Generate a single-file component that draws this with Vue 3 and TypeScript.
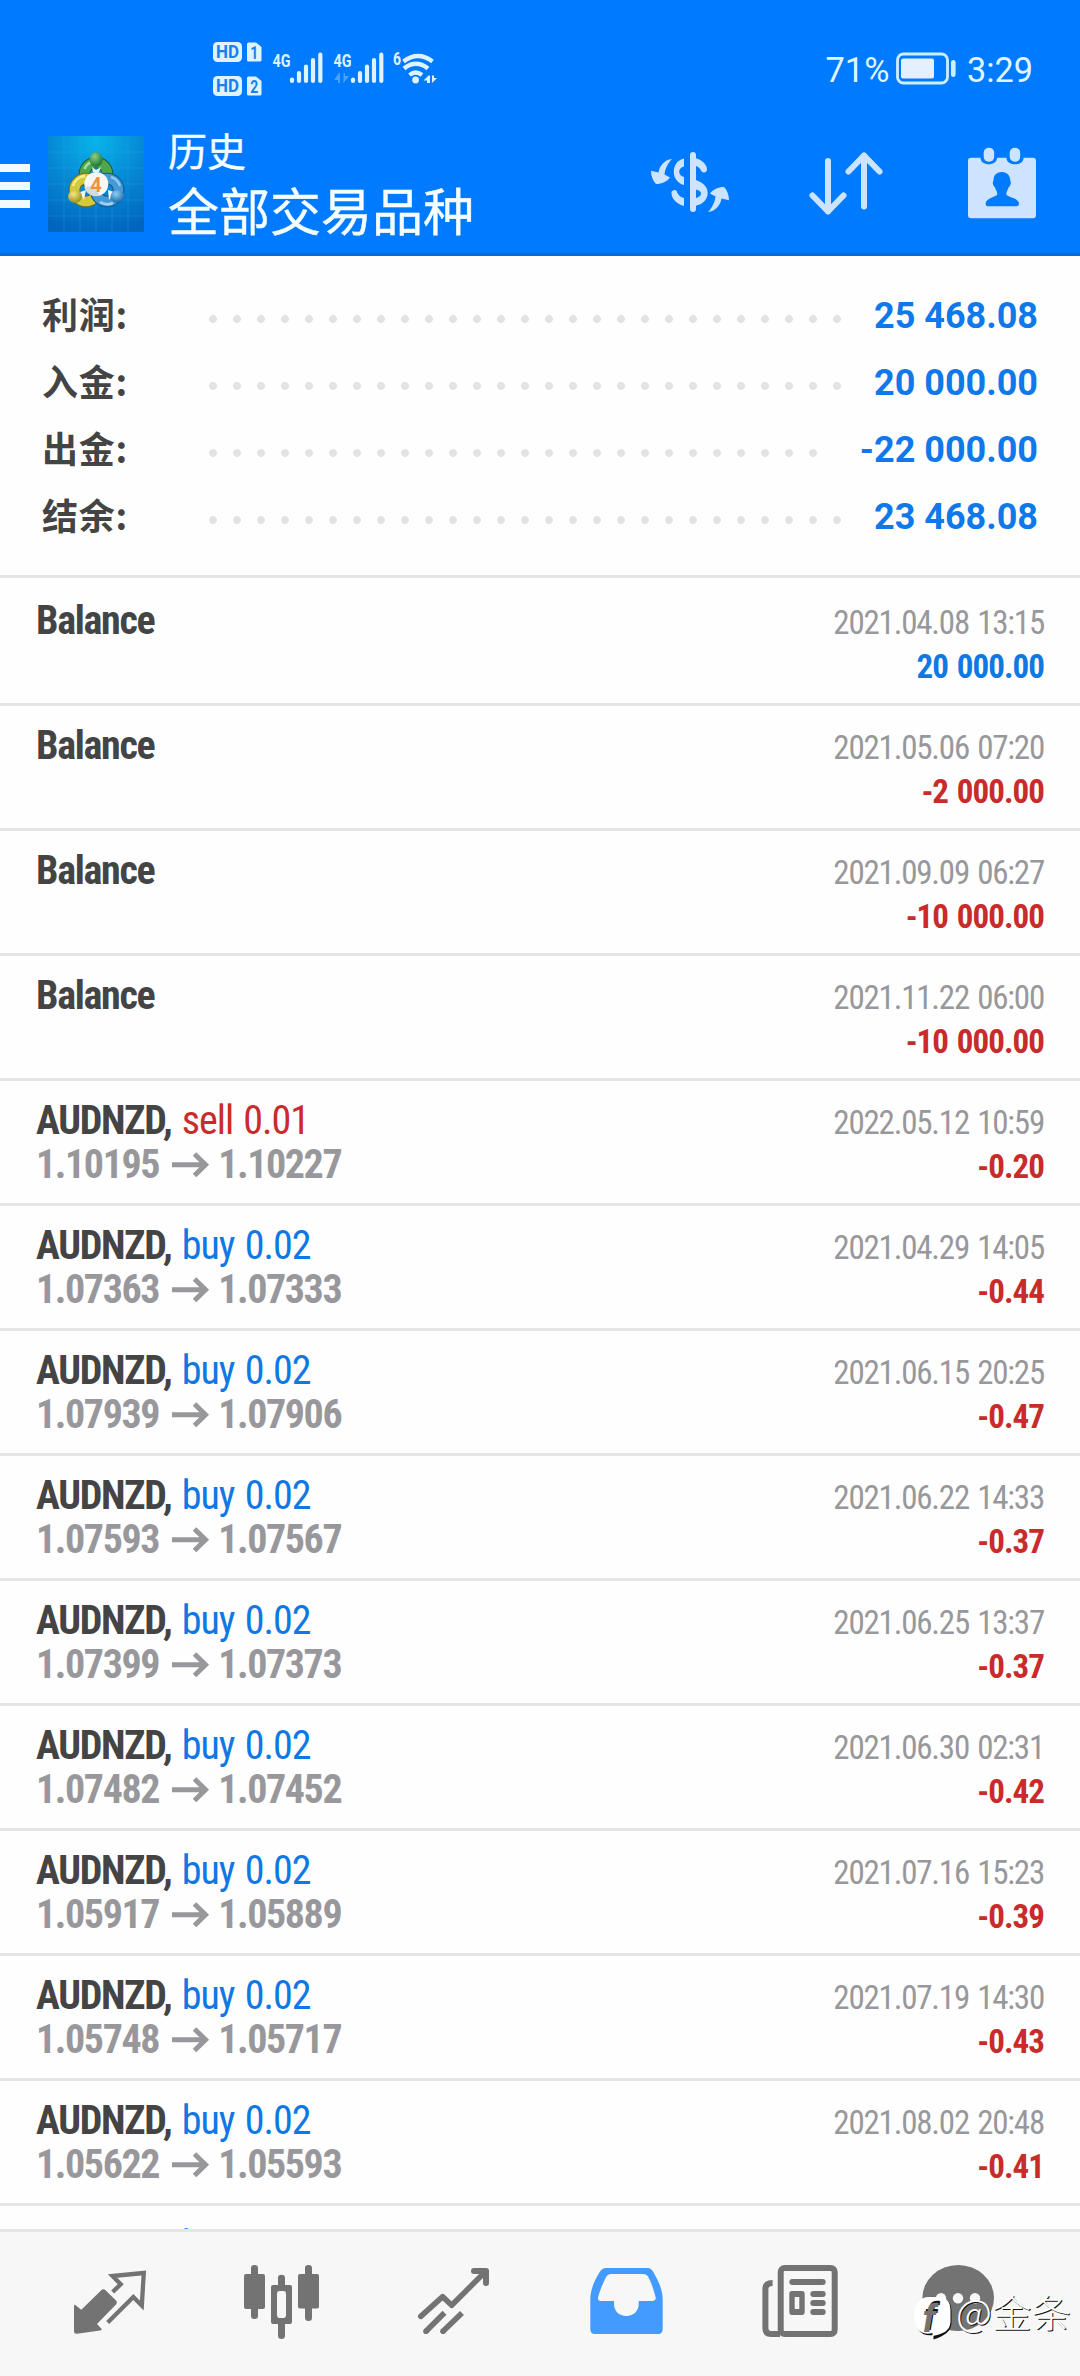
<script setup lang="ts">
interface SummaryLine { label: string; value: string; dots: number }
interface Deal {
  symbol: string
  action?: string
  side?: 'buy' | 'sell'
  open?: string
  close?: string
  time: string
  amount: string
}

const summary: SummaryLine[] = [
  { label: '利润:', value: '25 468.08', dots: 27 },
  { label: '入金:', value: '20 000.00', dots: 27 },
  { label: '出金:', value: '-22 000.00', dots: 26 },
  { label: '结余:', value: '23 468.08', dots: 27 },
]

const balance = (time: string, amount: string): Deal => ({ symbol: 'Balance', time, amount })
const deal = (side: 'buy' | 'sell', lots: string, open: string, close: string, time: string, amount: string): Deal => ({
  symbol: 'AUDNZD,', side, action: `${side} ${lots}`, open, close, time, amount,
})

const deals: Deal[] = [
  balance('2021.04.08 13:15', '20 000.00'),
  balance('2021.05.06 07:20', '-2 000.00'),
  balance('2021.09.09 06:27', '-10 000.00'),
  balance('2021.11.22 06:00', '-10 000.00'),
  deal('sell', '0.01', '1.10195', '1.10227', '2022.05.12 10:59', '-0.20'),
  deal('buy', '0.02', '1.07363', '1.07333', '2021.04.29 14:05', '-0.44'),
  deal('buy', '0.02', '1.07939', '1.07906', '2021.06.15 20:25', '-0.47'),
  deal('buy', '0.02', '1.07593', '1.07567', '2021.06.22 14:33', '-0.37'),
  deal('buy', '0.02', '1.07399', '1.07373', '2021.06.25 13:37', '-0.37'),
  deal('buy', '0.02', '1.07482', '1.07452', '2021.06.30 02:31', '-0.42'),
  deal('buy', '0.02', '1.05917', '1.05889', '2021.07.16 15:23', '-0.39'),
  deal('buy', '0.02', '1.05748', '1.05717', '2021.07.19 14:30', '-0.43'),
  deal('buy', '0.02', '1.05622', '1.05593', '2021.08.02 20:48', '-0.41'),
  deal('buy', '0.02', '', '', '', ''),
]
</script>

<template>
  <div class="screen">
    <header class="header">
      <div class="status">
        <svg class="signals" viewBox="205 36 240 64" width="240" height="64">
          <g fill="#dff3ff">
            <rect x="213" y="42" width="29" height="20" rx="4.5" />
            <rect x="213" y="76" width="29" height="20" rx="4.5" />
            <path d="M248.500 42.500H256L261.500 47V60Q261.500 61.500 260 61.500H248.500Q247 61.500 247 60V44Q247 42.500 248.500 42.500Z" />
            <path d="M248.500 76.500H256L261.500 81V94Q261.500 95.500 260 95.500H248.500Q247 95.500 247 94V78Q247 76.500 248.500 76.500Z" />
          </g>
          <g class="badge-text" fill="#1a7ff0">
            <text x="216" y="58.300" textLength="23" lengthAdjust="spacingAndGlyphs">HD</text>
            <text x="216" y="92.300" textLength="23" lengthAdjust="spacingAndGlyphs">HD</text>
            <text x="250.300" y="58.500" textLength="8" lengthAdjust="spacingAndGlyphs">1</text>
            <text x="250.300" y="92.500" textLength="8" lengthAdjust="spacingAndGlyphs">2</text>
          </g>
          <g class="net-text" fill="#dff3ff">
            <text x="272.500" y="66.500" textLength="18" lengthAdjust="spacingAndGlyphs">4G</text>
            <text x="333.500" y="66.500" textLength="18" lengthAdjust="spacingAndGlyphs">4G</text>
            <text x="393" y="65.200" textLength="8" lengthAdjust="spacingAndGlyphs">6</text>
          </g>
          <g stroke="#dff3ff" stroke-width="4.200" stroke-linecap="round">
            <path d="M292 79.500V81M299 73V81M306 66.500V81M313 60V81M320.300 54.500V81" />
            <path d="M353 79.500V81M360 73V81M367 66.500V81M374 60V81M381.300 54.500V81" />
          </g>
          <path d="M339 73L334 80H338V83H340V73ZM343.500 83V73H345V76H349Z" fill="#4aa3ff" />
          <g fill="none" stroke="#dff3ff" stroke-width="4.200">
            <path d="M403.500 61.500Q418 50.500 432.500 61.500" />
            <path d="M404 68.500Q416 59 428 68.500" stroke-width="4.500" />
            <path d="M409.500 75Q415.500 70 422 75" />
          </g>
          <circle cx="415.600" cy="80" r="3.400" fill="#dff3ff" />
          <path d="M428.500 75.500L423.500 80.500H427V83H430V75.500ZM432 83V75.500H434V78H437Z" fill="#dff3ff" />
        </svg>
        <svg class="power" viewBox="820 46 220 44" width="220" height="44">
          <g class="clock-text" fill="#dff6ff">
            <text x="825.500" y="82" textLength="64" lengthAdjust="spacingAndGlyphs">71%</text>
            <text x="967" y="82" textLength="66" lengthAdjust="spacingAndGlyphs">3:29</text>
          </g>
          <rect x="897.500" y="54" width="50" height="29" rx="6" fill="none" stroke="#cdeeff" stroke-width="2.800" />
          <rect x="901" y="58.500" width="33" height="20" rx="2" fill="#e4f0ff" />
          <rect x="951" y="60" width="4.600" height="17" rx="2.300" fill="#cdeeff" />
        </svg>
      </div>

      <div class="appbar">
        <div class="menu"><i /><i /><i /></div>
        <svg class="logo" viewBox="0 0 96 96" width="96" height="96">
          <defs>
            <radialGradient id="bg" cx=".5" cy=".05" r="1"><stop offset="0" stop-color="#08b4ea" /><stop offset=".5" stop-color="#0588d4" /><stop offset="1" stop-color="#0164bd" /></radialGradient>
            <radialGradient id="gg" cx=".4" cy=".3" r=".7"><stop offset="0" stop-color="#8fd184" /><stop offset="1" stop-color="#1c7334" /></radialGradient>
            <radialGradient id="yg" cx=".4" cy=".3" r=".7"><stop offset="0" stop-color="#f4ea7c" /><stop offset="1" stop-color="#97921c" /></radialGradient>
            <radialGradient id="blg" cx=".4" cy=".3" r=".7"><stop offset="0" stop-color="#8fd0f4" /><stop offset="1" stop-color="#1568ab" /></radialGradient>
          </defs>
          <rect width="96" height="96" fill="url(#bg)" />
          <path d="M0 16H96M0 32H96M0 48H96M0 64H96M0 80H96M16 0V96M32 0V96M48 0V96M64 0V96M80 0V96" stroke="#39a9e8" stroke-opacity=".35" stroke-width=".8" />
          <g fill="none">
            <circle cx="48" cy="38" r="11.500" stroke="#1a5e35" stroke-width="11.500" />
            <circle cx="48" cy="38" r="11.500" stroke="#4fa64d" stroke-width="9.500" />
            <path d="M36.500 33A13 13 0 0 1 43 26" stroke="#a3dc94" stroke-width="2.500" />
            <circle cx="38" cy="54" r="11.500" stroke="#716d22" stroke-width="11.500" />
            <circle cx="38" cy="54" r="11.500" stroke="#d2c93c" stroke-width="9.500" />
            <path d="M25 50A14 14 0 0 1 37 40" stroke="#f5ef88" stroke-width="2.500" />
            <circle cx="59" cy="54" r="11.500" stroke="#15568c" stroke-width="11.500" />
            <circle cx="59" cy="54" r="11.500" stroke="#4799d6" stroke-width="9.500" />
            <path d="M52 66A14 14 0 0 0 65 67" stroke="#9ed3f3" stroke-width="2.500" />
            <path d="M63 41A14 14 0 0 1 72 50" stroke="#8bc9ef" stroke-width="2.500" />
          </g>
          <path d="M44 31L48 34L53 31L51 36H45Z" fill="#e6f3e4" />
          <path d="M32 56L38 54L36 64ZM66 56L60 54L61 64Z" fill="#eef4fb" />
          <ellipse cx="48" cy="23.500" rx="6.500" ry="7.300" fill="url(#gg)" />
          <ellipse cx="27" cy="60.500" rx="7" ry="6.500" fill="url(#yg)" />
          <ellipse cx="69.500" cy="60.500" rx="7" ry="6.500" fill="url(#blg)" />
          <circle cx="48.300" cy="48" r="12" fill="#f6f7f8" />
          <path d="M36.300 51Q45 49 48 53.500T52 59.400A12 12 0 0 1 36.300 51Z" fill="#d5dadf" />
          <text x="48" y="55.500" text-anchor="middle" class="logo-text" fill="#f0913e">4</text>
        </svg>
        <div class="titles">
          <div class="title">历史</div>
          <div class="subtitle">全部交易品种</div>
        </div>
        <svg class="actions" viewBox="640 144 400 80" width="400" height="80" fill="#cce4ff">
          <rect x="690" y="152" width="6" height="60" rx="3" />
          <path d="M684 158.500C677 160 673.800 166 673.800 171.700S677 183 684 185V177C681 176 679.200 174.500 679.200 171.700S681 167.500 684 166.500Z" />
          <path d="M684 206C677 204 672 199.500 671.500 193.500A2.800 2.800 0 0 1 677.200 192.500C678.500 195.500 681 197.500 684 198Z" />
          <path d="M696 158.300C702 160 707.500 165 707 170A3.100 3.100 0 0 1 701 170.500C700 168.500 698.500 166.500 696 166Z" />
          <path fill-rule="evenodd" d="M696 180C702 182.500 707.700 186 707.700 193S702 204.500 696 205.700ZM696 189.500V198C699 197 701 196 701 193.500S699 190.500 696 189.500Z" />
          <path d="M672 159C664 160 659.500 166 658.500 172.500L651 170.700C651 176 653 181 656 184C662 184 667 181.500 670 177.500L664.500 174.500C665 169 668 163 672 159Z" />
          <path transform="rotate(180 690 185.500)" d="M672 159C664 160 659.500 166 658.500 172.500L651 170.700C651 176 653 181 656 184C662 184 667 181.500 670 177.500L664.500 174.500C665 169 668 163 672 159Z" />
          <g fill="none" stroke="#cce4ff" stroke-width="6" stroke-linecap="round" stroke-linejoin="round">
            <path d="M828 161V211.500M812.500 195.500L828 211.500L843.500 195.500" />
            <path d="M864 206.500V155.500M848.500 171.500L864 155.500L879.500 171.500" />
          </g>
          <path fill-rule="evenodd" d="M971 157.700H980.500C980.500 162 984 164.200 988.700 164.200S997 162 997 157.700H1006.500C1006.500 162 1010 164.200 1015 164.200S1023.500 162 1023.500 157.700H1033Q1036 157.700 1036 161V215Q1036 218.300 1033 218.300H971Q968 218.300 968 215V161Q968 157.700 971 157.700ZM1001.800 172C996 172 993.500 176 993.500 180.500C991.800 183 993.500 186 995 187.500C995.500 190 998 192 997 195C994 197.500 987 198 985.600 203Q985.600 206.200 987.500 206.200H1016.500Q1019 206.200 1019 203C1017.500 198 1009.500 197.500 1006.600 195C1005.600 192 1008 190 1008.500 187.500C1010 186 1011.800 183 1010.200 180.500C1010.200 176 1007.500 172 1001.800 172Z" />
          <rect x="983.700" y="147.700" width="10.500" height="14" rx="5" />
          <rect x="1009.700" y="147.700" width="10.500" height="14" rx="5" />
        </svg>
      </div>
    </header>

    <section class="summary">
      <div v-for="line in summary" :key="line.label" class="sum-line">
        <span class="sum-label">{{ line.label }}</span>
        <span class="dots" :style="{ width: line.dots * 24 + 'px' }" />
        <span class="sum-value">{{ line.value }}</span>
      </div>
    </section>

    <main class="list">
      <div v-for="(d, i) in deals" :key="i" class="row">
        <div class="left">
          <div class="line1"><b>{{ d.symbol }}</b><span v-if="d.action" :class="d.side">&nbsp;{{ d.action }}</span></div>
          <div v-if="d.open" class="line2">
            <span>{{ d.open }}</span>
            <svg viewBox="0 0 38 26" width="38" height="26"><path d="M0 12.700H33M22.500 2L33.500 12.700L22.500 23.500" fill="none" stroke="#98989c" stroke-width="5" /></svg>
            <span>{{ d.close }}</span>
          </div>
        </div>
        <div class="right">
          <div class="time">{{ d.time }}</div>
          <div class="amount" :class="d.amount.startsWith('-') ? 'sell' : 'buy'">{{ d.amount }}</div>
        </div>
      </div>
    </main>

    <nav class="tabs">
      <svg viewBox="24 2232 172 144" class="tab">
        <path d="M101.500 2290Q103.300 2288.300 105.300 2290L116.500 2301Q117.500 2302.700 116 2304.500L97 2324L101.700 2329Q102 2330.500 100 2330.500L77 2333.700Q74 2334 74 2331.500V2306Q74.300 2304 76 2305.500L81.300 2309.700Z" />
        <path d="M112.700 2292L120.700 2284.300L112.500 2276L143.800 2273L141.800 2305.500L133.300 2297L107.700 2322.500" fill="none" stroke="#737373" stroke-width="4.300" />
      </svg>
      <svg viewBox="196 2232 172 144" class="tab">
        <rect x="244" y="2274" width="21" height="35" rx="2" /><rect x="251" y="2265" width="7" height="54" rx="3.300" />
        <rect x="298" y="2274" width="21" height="34.500" rx="2" /><rect x="305" y="2265" width="7" height="56" rx="3.300" />
        <path fill-rule="evenodd" d="M273 2285H278V2278Q278 2274.700 281.500 2274.700T285 2278V2285H290Q292 2285 292 2287V2322Q292 2324 290 2324H285V2335.500Q285 2339 281.500 2339T278 2335.500V2324H273Q271 2324 271 2322V2287Q271 2285 273 2285ZM279.500 2291Q277 2291 277 2294V2315Q277 2318 279.500 2318H283.500Q286 2318 286 2315V2294Q286 2291 283.500 2291Z" />
      </svg>
      <svg viewBox="368 2232 172 144" class="tab">
        <g fill="none" stroke="#737373" stroke-width="5.600" stroke-linejoin="round">
          <path d="M420.800 2316.300L442.700 2296.700L451.700 2305.300L485 2272" stroke-linecap="round" />
          <path d="M474 2271H486V2283" stroke-width="6" stroke-linecap="round" />
          <path d="M426 2331.300L444.500 2312.700M443 2331.300L462 2313" />
        </g>
        <circle cx="426" cy="2331.200" r="2.800" /><circle cx="443" cy="2331.200" r="2.800" />
        <path d="M479 2274H483V2278Z" />
      </svg>
      <svg viewBox="540 2232 172 144" class="tab">
        <path fill="#439bff" fill-rule="evenodd" d="M605.500 2268H648Q651 2268 653 2271.500C659 2282 662.700 2290 662.700 2300V2329Q662.700 2334 658 2334H595Q590.300 2334 590.300 2329V2300C590.300 2290 594 2281 600 2271.500Q602.500 2268 605.500 2268ZM611 2274Q607.500 2274 605.800 2277.500Q600.500 2288 598 2297.500Q597.500 2301 601 2301H614V2304C614 2311 619 2316 626.300 2316S638.700 2311 638.700 2304V2301H652Q656 2301 655.700 2297.500C653.500 2289 651 2282 648.500 2277.500Q647.500 2274 642.500 2274Z" />
      </svg>
      <svg viewBox="712 2232 172 144" class="tab">
        <rect x="780.700" y="2268" width="54" height="66" rx="4" fill="none" stroke="#737373" stroke-width="6" />
        <path d="M772.600 2283Q765.400 2283 765.400 2289V2328Q765.400 2334 771 2334H780" fill="none" stroke="#737373" stroke-width="6" />
        <rect x="789.300" y="2279" width="36.400" height="6" rx="3" />
        <path fill-rule="evenodd" d="M792 2291H802Q804.700 2291 804.700 2294V2312Q804.700 2315 802 2315H792Q789.300 2315 789.300 2312V2294Q789.300 2291 792 2291ZM794.700 2297V2309H799.300V2297Z" />
        <rect x="810.300" y="2291" width="15.400" height="6" rx="3" /><rect x="810.300" y="2300" width="15.400" height="6" rx="3" /><rect x="810.300" y="2309" width="15.400" height="6" rx="3" />
      </svg>
      <svg viewBox="884 2232 172 144" class="tab">
        <ellipse cx="958.200" cy="2298" rx="35.800" ry="33" />
        <circle cx="941" cy="2298.300" r="5.200" fill="#f7f7f7" /><circle cx="958" cy="2298.300" r="5.200" fill="#f7f7f7" /><circle cx="975" cy="2298.300" r="5.200" fill="#f7f7f7" />
      </svg>
    </nav>

    <svg class="watermark" viewBox="905 2278 175 80" width="175" height="80">
      <path d="M929 2297H940Q950 2298 950.500 2310V2322C950 2331 943 2335 932.500 2338.500V2334C920 2336 914 2328 914 2316S920 2297 929 2297Z" fill="#111" transform="translate(1 1)" />
      <path d="M929 2297H940Q950 2298 950.500 2310V2322C950 2331 943 2334 932.500 2336V2333C920 2336 914 2328 914 2316S920 2297 929 2297Z" fill="#fff" />
      <text x="924" y="2330" class="wm-logo" fill="#111">f</text>
      <text x="922.500" y="2331.500" class="wm-logo" fill="#737373">f</text>
      <text x="957" y="2328" class="wm-text" fill="#111" textLength="115" lengthAdjust="spacingAndGlyphs">@金条</text>
      <text x="956" y="2327" class="wm-text" fill="#fff" textLength="115" lengthAdjust="spacingAndGlyphs">@金条</text>
    </svg>
  </div>
</template>

<style>
body { margin: 0; background: #fff; }
</style>

<style scoped>
.screen { position: relative; display: flex; flex-direction: column; width: 1080px; height: 2376px; overflow: hidden; background: #fefefe; font-family: Roboto, "Noto Sans CJK SC", sans-serif; }
svg { display: block; flex: none; }
.header { box-sizing: border-box; height: 256px; flex: none; background: #007aff; border-bottom: 3px solid #0a6bdb; }
.status { display: flex; justify-content: space-between; align-items: flex-start; height: 112px; padding: 0 40px 0 205px; box-sizing: border-box; }
.signals { margin-top: 36px; }
.power { margin-top: 46px; }
.badge-text { font: 700 18px Roboto, sans-serif; }
.net-text { font: 700 19px Roboto, sans-serif; }
.clock-text { font: 400 35px Roboto, sans-serif; }
.appbar { display: flex; align-items: center; height: 144px; padding-right: 40px; }
.menu { display: flex; flex-direction: column; gap: 10px; width: 48px; margin-top: 4px; }
.menu i { width: 30px; height: 8px; background: #f0faff; }
.logo-text { font: 700 20px Roboto, sans-serif; }
.titles { flex: 1; margin: -3px 0 0 24px; color: #f6fdff; font-family: "Noto Sans CJK SC", sans-serif; white-space: nowrap; -webkit-text-stroke: .4px #f6fdff; }
.title { font-size: 39px; line-height: 54px; }
.subtitle { font-size: 51px; line-height: 67px; }
.summary { box-sizing: border-box; height: 322px; flex: none; padding: 26px 42px 0; border-bottom: 3px solid #e5e5e5; }
.sum-line { display: flex; align-items: center; height: 67px; }
.sum-label { width: 158.500px; font: 700 36px/67px "Noto Sans CJK SC", sans-serif; letter-spacing: .7px; color: #444; white-space: nowrap; margin-top: -4px; }
.dots { height: 24px; margin-top: 7px; background: radial-gradient(circle, #e3e3e3 3.600px, transparent 4.200px) 0 0 / 24px 24px; }
.sum-value { margin-left: auto; font-weight: 700; font-size: 36px; color: #0f78ea; white-space: nowrap; }
.list { flex: 1; min-height: 0; overflow: hidden; }
.row { box-sizing: border-box; display: flex; justify-content: space-between; height: 125px; padding: 18px 36px 0; border-top: 3px solid #e5e5e5; font-stretch: 75%; font-family: "Roboto Condensed", Roboto, sans-serif; white-space: nowrap; }
.row:first-child { border-top-color: transparent; }
.line1 { font-size: 40px; line-height: 44px; color: #444; letter-spacing: -1px; word-spacing: 2px; }
.line1 b { letter-spacing: -1.300px; }
.line2 { display: flex; align-items: center; gap: 13px; font-weight: 700; font-size: 40px; line-height: 44px; color: #98989c; letter-spacing: -1.400px; }
.line2 svg { margin-right: -5px; }
.right { text-align: right; font-size: 33px; line-height: 44px; padding-top: 2px; }
.time { color: #98989c; letter-spacing: -1.200px; word-spacing: 1.700px; }
.amount { font-weight: 700; letter-spacing: -.950px; word-spacing: 2px; }
.buy { color: #0f78e4; }
.sell { color: #c92b2b; }
.tabs { box-sizing: border-box; display: flex; flex: none; height: 147px; padding: 0 24px; background: #f7f7f7; border-top: 3px solid #e5e5e5; }
.tab { width: 172px; height: 144px; fill: #737373; }
.watermark { position: absolute; right: 0; bottom: 18px; }
.wm-logo { font: italic 700 38px Roboto, sans-serif; }
.wm-text { font: 300 38px "Noto Sans CJK SC", sans-serif; }
</style>
